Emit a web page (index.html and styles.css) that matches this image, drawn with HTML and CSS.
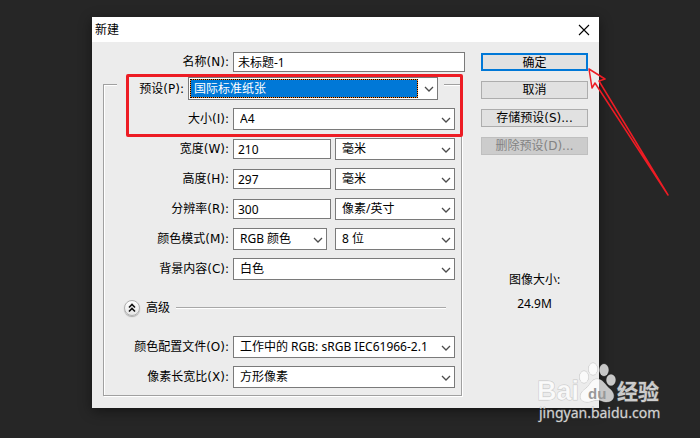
FILE: index.html
```html
<!DOCTYPE html>
<html lang="zh-CN">
<head>
<meta charset="utf-8">
<title>新建</title>
<link rel="stylesheet" href="styles.css">
</head>
<body>
<svg class="defs" aria-hidden="true">
  <symbol id="chevron" viewBox="0 0 10 6"><path d="M1 1 L5 5 L9 1" fill="none" stroke="#4c4c4c" stroke-width="1.3"/></symbol>
</svg>
<main class="dialog">
  <header class="titlebar">
    <h1>新建</h1>
    <button class="close" type="button" aria-label="关闭"><svg width="12" height="12" viewBox="0 0 12 12"><path d="M1 1 L11 11 M11 1 L1 11" stroke="#000" stroke-width="1.1"/></svg></button>
  </header>
  <form class="content">
    <div class="settings">
      <div class="row name-row">
        <label for="name">名称(N):</label>
        <input id="name" type="text" value="未标题-1">
      </div>
      <div class="group">
        <div class="preset">
          <label for="preset">预设(P):</label>
          <span class="select focused"><select id="preset"><option>国际标准纸张</option></select><svg><use href="#chevron"/></svg></span>
        </div>
        <div class="rows">
          <div class="row">
            <label for="size">大小(I):</label>
            <span class="select"><select id="size"><option>A4</option></select><svg><use href="#chevron"/></svg></span>
          </div>
          <div class="row pair">
            <label for="width">宽度(W):</label>
            <input id="width" type="text" value="210">
            <span class="select"><select aria-label="宽度单位"><option>毫米</option></select><svg><use href="#chevron"/></svg></span>
          </div>
          <div class="row pair">
            <label for="height">高度(H):</label>
            <input id="height" type="text" value="297">
            <span class="select"><select aria-label="高度单位"><option>毫米</option></select><svg><use href="#chevron"/></svg></span>
          </div>
          <div class="row pair">
            <label for="resolution">分辨率(R):</label>
            <input id="resolution" type="text" value="300">
            <span class="select"><select aria-label="分辨率单位"><option>像素/英寸</option></select><svg><use href="#chevron"/></svg></span>
          </div>
          <div class="row pair mode">
            <label for="mode">颜色模式(M):</label>
            <span class="select"><select id="mode"><option>RGB 颜色</option></select><svg><use href="#chevron"/></svg></span>
            <span class="select"><select aria-label="位深度"><option>8 位</option></select><svg><use href="#chevron"/></svg></span>
          </div>
          <div class="row">
            <label for="background">背景内容(C):</label>
            <span class="select"><select id="background"><option>白色</option></select><svg><use href="#chevron"/></svg></span>
          </div>
        </div>
        <div class="advanced">
          <button class="collapse" type="button" aria-label="收起高级选项"><svg width="8" height="10" viewBox="0 0 8 10"><path d="M1 4.5 L4 1.5 L7 4.5 M1 8.5 L4 5.5 L7 8.5" fill="none" stroke="#111" stroke-width="1.6"/></svg></button>
          <span>高级</span>
          <hr>
        </div>
        <div class="rows">
          <div class="row">
            <label for="profile">颜色配置文件(O):</label>
            <span class="select"><select id="profile"><option>工作中的 RGB: sRGB IEC61966-2.1</option></select><svg><use href="#chevron"/></svg></span>
          </div>
          <div class="row">
            <label for="ratio">像素长宽比(X):</label>
            <span class="select"><select id="ratio"><option>方形像素</option></select><svg><use href="#chevron"/></svg></span>
          </div>
        </div>
        <div class="highlight"></div>
      </div>
    </div>
    <aside class="side">
      <button class="action primary" type="button">确定</button>
      <button class="action" type="button">取消</button>
      <button class="action" type="button">存储预设(S)...</button>
      <button class="action" type="button" disabled>删除预设(D)...</button>
      <div class="filesize"><p>图像大小:</p><p>24.9M</p></div>
    </aside>
  </form>
  <svg class="arrow" width="84" height="130" viewBox="0 0 84 130" aria-hidden="true">
    <path d="M3 3 L19 13 L13 15 L82 129 L9 17 L6 22 Z" fill="none" stroke="#ed1c24" stroke-width="1.5" stroke-linejoin="round"/>
  </svg>
  <svg class="watermark" width="134" height="66" viewBox="0 0 134 66" aria-hidden="true">
    <g class="mark">
      <text class="bai" x="3" y="39">Bai</text>
      <ellipse cx="50" cy="16" rx="4.5" ry="6"/>
      <ellipse cx="59" cy="8" rx="4.5" ry="6"/>
      <ellipse cx="70" cy="9" rx="4.5" ry="6"/>
      <ellipse cx="77" cy="19" rx="4.5" ry="5.5"/>
      <path d="M63 18 C57 18 56 25 51 28 C44 33 45 41 53 41 C58 41 59 39 63 39 C67 39 69 41 72 41 C81 41 82 33 76 28 C71 24 69 18 63 18 Z"/>
      <text class="du" x="54" y="38">du</text>
      <text class="jy" x="83" y="38">经验</text>
      <text class="url" x="5" y="57">jingyan.baidu.com</text>
    </g>
  </svg>
</main>
</body>
</html>
```

FILE: styles.css
```css
* { box-sizing: border-box; }
body {
  margin: 0;
  min-height: 100vh;
  padding: 17px 101px 30px 92px;
  background: #262626;
  color: #000;
  font: 12px/18px "Noto Sans", "Noto Sans CJK SC", sans-serif;
}
input, select, button { font: inherit; color: inherit; margin: 0; }
label, .action { font-family: "DejaVu Sans", "Noto Sans CJK SC", sans-serif; }
.defs { position: absolute; width: 0; height: 0; }
.dialog {
  position: relative;
  background: #ececec;
  box-shadow: 0 3px 12px rgba(0, 0, 0, 0.45);
}
.titlebar {
  display: flex;
  align-items: center;
  justify-content: space-between;
  height: 25px;
  padding: 0 9px 0 3px;
  background: #fff;
}
.titlebar h1 { margin: 0; font-size: 12px; font-weight: 400; }
.close { display: flex; padding: 0; border: 0; background: none; }
.content { display: flex; gap: 16px; padding: 10px 11px 12px; }
.settings { flex: 1; min-width: 0; }
.row {
  display: grid;
  grid-template-columns: 116px 1fr;
  column-gap: 4px;
  align-items: center;
  height: 22px;
}
.row label { text-align: right; white-space: nowrap; }
.name-row { grid-template-columns: 126px 1fr; height: 20px; }
input {
  width: 100%;
  min-width: 0;
  height: 20px;
  padding: 0 4px;
  border: 1px solid #7a7a7a;
  background: #fff;
}
.group {
  position: relative;
  margin: 12px 3px 0 0;
  padding: 0 6px 7px 9px;
  border: 1px solid #a0a0a0;
  box-shadow: 1px 1px 0 #fff, inset 1px 1px 0 #fff;
}
.preset {
  display: flex;
  align-items: center;
  gap: 4px;
  margin: -8px 11px 8px 4px;
  background: #ececec;
}
.preset label { width: 67px; text-align: right; }
.preset .select { flex: 1; margin-right: 6px; }
.rows { display: grid; gap: 8px; }
.pair { grid-template-columns: 116px 98px 1fr; }
.mode .select:nth-child(2) { margin-right: 4px; }
.select {
  position: relative;
  display: block;
  min-width: 0;
  height: 22px;
  border: 1px solid #7a7a7a;
  background: #fff;
}
.select select {
  appearance: none;
  display: block;
  width: 100%;
  height: 100%;
  padding: 0 20px 0 6px;
  border: 0;
  border-radius: 0;
  outline: 0;
  background: none;
}
.select svg {
  position: absolute;
  right: 3px;
  top: 8px;
  width: 10px;
  height: 6px;
  pointer-events: none;
}
.focused { height: 23px; padding: 1px 19px 1px 1px; }
.focused select {
  padding: 0 3px;
  border: 1px dotted #000;
  background: linear-gradient(#0078d7, #0078d7) padding-box, #ff8728 border-box;
  color: #fff;
}
.advanced {
  display: flex;
  align-items: center;
  height: 18px;
  gap: 6px;
  margin: 19px 9px 19px 11px;
}
.collapse {
  display: flex;
  align-items: center;
  justify-content: center;
  width: 16px;
  height: 16px;
  padding: 0;
  border: 1px solid #b0b0b0;
  border-radius: 50%;
  background: linear-gradient(#fff, #e6e6e6);
  box-shadow: 0 1px 1px #aaa;
}
.advanced hr {
  flex: 1;
  margin: 0;
  border: 0;
  border-top: 1px solid #a8a8a8;
  border-bottom: 1px solid #fff;
}
.highlight {
  position: absolute;
  left: 22px;
  right: -2px;
  top: -11px;
  height: 63px;
  border: 3px solid #ed1c24;
  border-radius: 2px;
  pointer-events: none;
}
.side {
  display: flex;
  flex-direction: column;
  gap: 10px;
  width: 107px;
  padding-top: 1px;
}
.action {
  height: 18px;
  padding: 0;
  border: 1px solid #adadad;
  background: #e1e1e1;
  line-height: 16px;
}
.primary { border: 2px solid #0078d7; }
.action:disabled { border-color: #bfbfbf; background: #ccc; color: #838383; }
.filesize { margin-top: auto; padding-bottom: 80px; text-align: center; }
.filesize p { margin: 0; line-height: 24px; }
.arrow { position: absolute; right: -71px; top: 49px; pointer-events: none; }
.watermark { position: absolute; right: -69px; bottom: -19px; pointer-events: none; }
.mark { fill: rgba(255, 255, 255, 0.75); stroke: rgba(150, 150, 150, 0.45); stroke-width: 1; paint-order: stroke; }
.bai { font: bold 27px "Liberation Sans", sans-serif; }
.du { font: bold 15px "Liberation Sans", sans-serif; fill: #999; stroke: none; }
.jy { font: bold 21px "Liberation Sans", "Noto Sans CJK SC", sans-serif; }
.url { font: 14px "Noto Sans", sans-serif; }
```
